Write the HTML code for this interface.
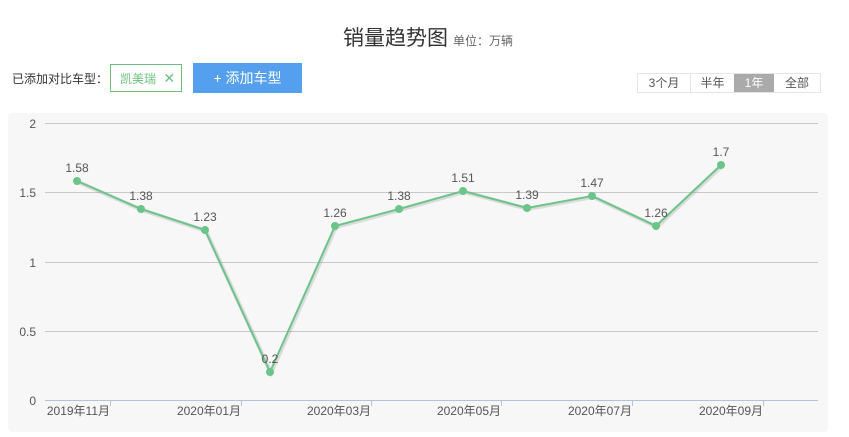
<!DOCTYPE html>
<html><head><meta charset="utf-8"><style>
body{margin:0;width:849px;height:437px;background:#fff;font-family:"Liberation Sans","Noto Sans CJK SC",sans-serif;position:relative;overflow:hidden}
.a{position:absolute;white-space:nowrap}
</style></head><body>
<div class="a" style="left:343px;top:22px;font-size:21px;color:#333">销量趋势图<span style="font-size:12px;color:#666;margin-left:5px">单位：万辆</span></div>
<div class="a" style="left:12px;top:70px;font-size:12px;color:#333">已添加对比车型：</div>
<div class="a" style="left:110px;top:64px;width:72px;height:28px;border:1px solid #6cc07d;box-sizing:border-box;font-size:12px;color:#6cc07d;line-height:26px;padding-left:9px">凯美瑞 <span style="font-size:14px;margin-left:4px">✕</span></div>
<div class="a" style="left:193px;top:63px;width:109px;height:30px;background:#55a0ee;color:#fff;font-size:14px;line-height:30px;text-align:center">+ 添加车型</div>
<div class="a" style="left:637px;top:73px;height:20px;display:flex;font-size:12px;color:#555;line-height:18px;border:1px solid #e5e5e5;box-sizing:border-box">
<div style="width:52px;text-align:center;border-right:1px solid #e5e5e5">3个月</div>
<div style="width:43px;text-align:center">半年</div>
<div style="width:40px;text-align:center;background:#aaa;color:#fff">1年</div>
<div style="width:46px;text-align:center">全部</div></div>
<div class="a" style="left:8px;top:113px;width:820px;height:319px;background:#f7f7f7;border-radius:4px"></div>
<svg class="a" style="left:0;top:0" width="849" height="437" font-family="Liberation Sans,Noto Sans CJK SC,sans-serif" font-size="12">
<g stroke="#c8c8c8" stroke-width="1"><line x1="45" y1="123.5" x2="818" y2="123.5"/><line x1="45" y1="192.5" x2="818" y2="192.5"/><line x1="45" y1="262.5" x2="818" y2="262.5"/><line x1="45" y1="331.5" x2="818" y2="331.5"/></g>
<line x1="45" y1="400.5" x2="818" y2="400.5" stroke="#b0c4de"/>
<g stroke="#b0c4de"><line x1="110.5" y1="400" x2="110.5" y2="406"/><line x1="241.5" y1="400" x2="241.5" y2="406"/><line x1="371.5" y1="400" x2="371.5" y2="406"/><line x1="501.5" y1="400" x2="501.5" y2="406"/><line x1="632.5" y1="400" x2="632.5" y2="406"/><line x1="763.5" y1="400" x2="763.5" y2="406"/></g>
<g fill="#555" text-anchor="end"><text x="36" y="128">2</text><text x="36" y="197">1.5</text><text x="36" y="267">1</text><text x="36" y="336">0.5</text><text x="36" y="405">0</text></g>
<g fill="#555" text-anchor="end"><text x="110" y="415">2019年11月</text><text x="241" y="415">2020年01月</text><text x="371" y="415">2020年03月</text><text x="501" y="415">2020年05月</text><text x="632" y="415">2020年07月</text><text x="763" y="415">2020年09月</text></g>
<polyline fill="none" stroke="#888" stroke-opacity="0.25" stroke-width="4" transform="translate(1,1)" points="77,181 141,209 205,230 270,372 335,226 399,209 463,191 527,208 592,196 656,226 721,165"/>
<polyline fill="none" stroke="#6cc48a" stroke-width="2" points="77,181 141,209 205,230 270,372 335,226 399,209 463,191 527,208 592,196 656,226 721,165"/>
<g fill="#6cc48a"><circle cx="77" cy="181" r="4"/><circle cx="141" cy="209" r="4"/><circle cx="205" cy="230" r="4"/><circle cx="270" cy="372" r="4"/><circle cx="335" cy="226" r="4"/><circle cx="399" cy="209" r="4"/><circle cx="463" cy="191" r="4"/><circle cx="527" cy="208" r="4"/><circle cx="592" cy="196" r="4"/><circle cx="656" cy="226" r="4"/><circle cx="721" cy="165" r="4"/></g>
<g fill="#555" text-anchor="middle"><text x="77" y="172">1.58</text><text x="141" y="200">1.38</text><text x="205" y="221">1.23</text><text x="270" y="363">0.2</text><text x="335" y="217">1.26</text><text x="399" y="200">1.38</text><text x="463" y="182">1.51</text><text x="527" y="199">1.39</text><text x="592" y="187">1.47</text><text x="656" y="217">1.26</text><text x="721" y="156">1.7</text></g>
</svg>
</body></html>
